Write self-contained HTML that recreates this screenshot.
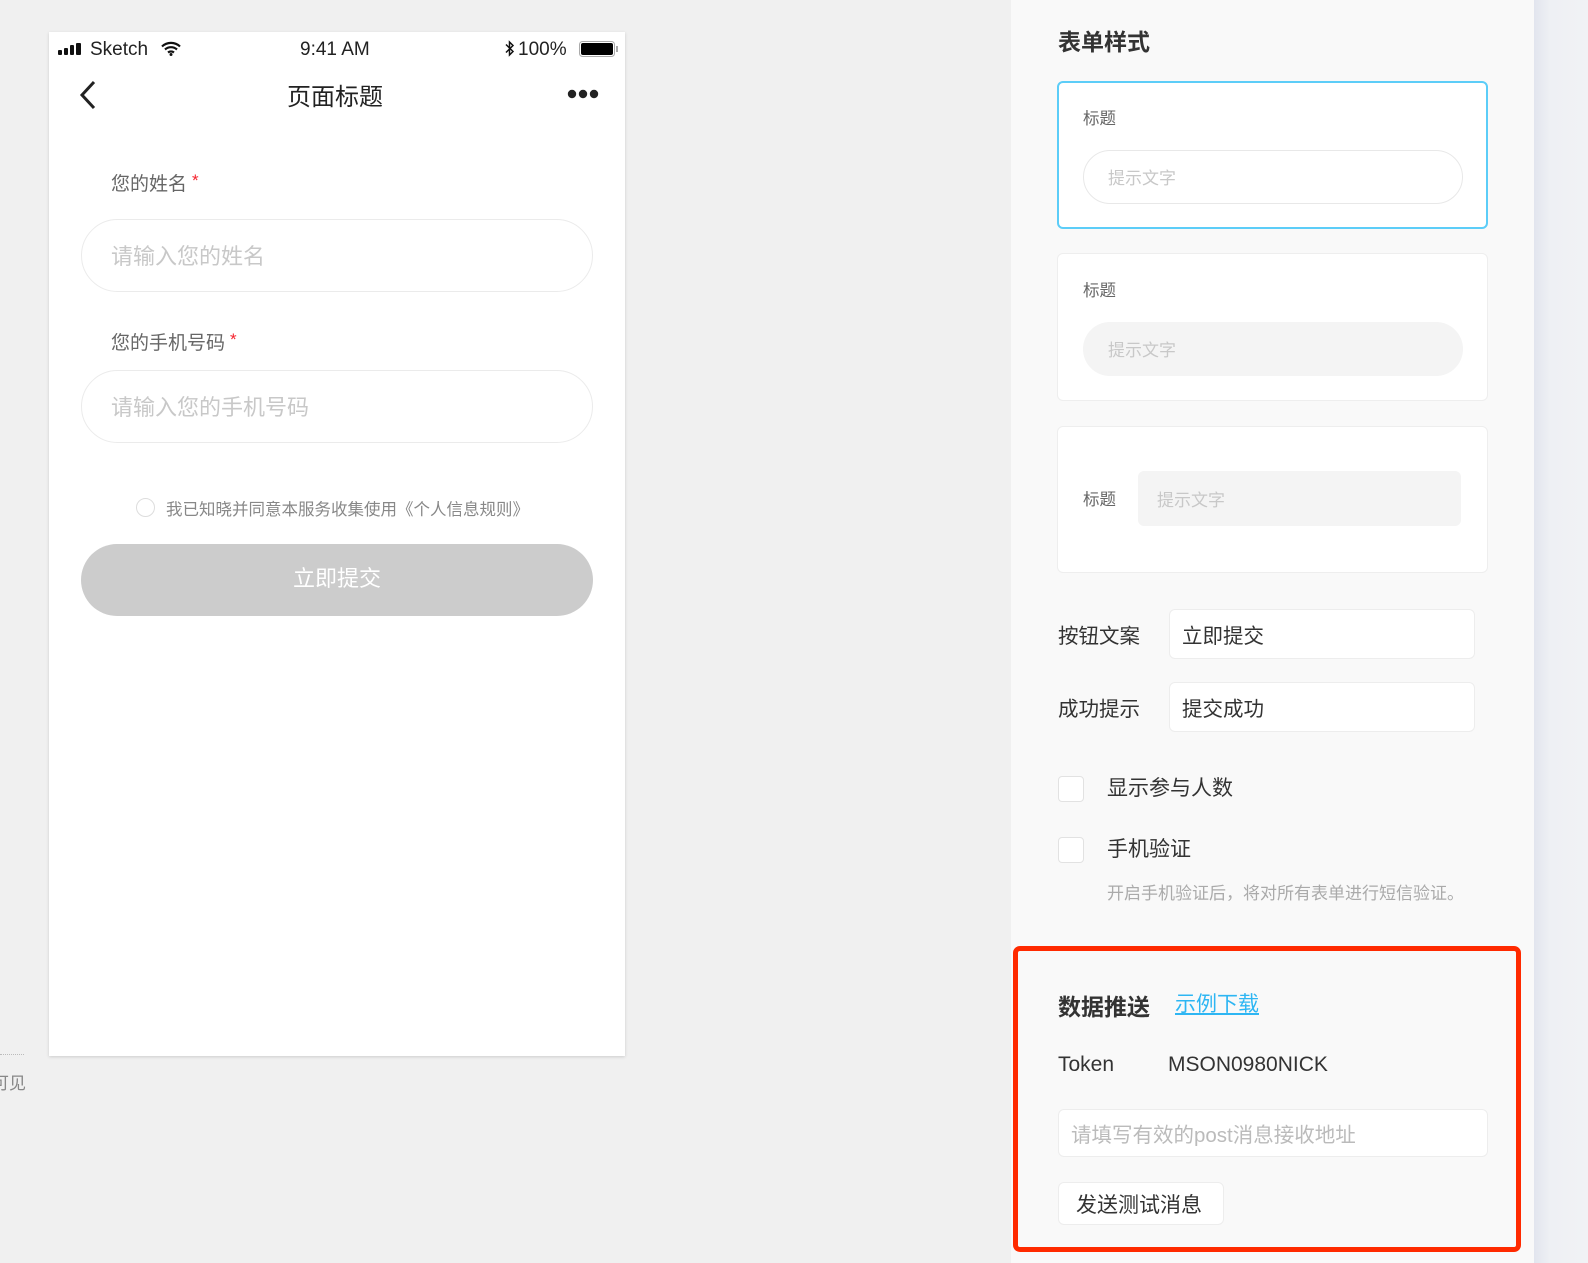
<!DOCTYPE html>
<html><head><meta charset="utf-8">
<style>
*{margin:0;padding:0;box-sizing:border-box}
html,body{width:1588px;height:1263px;overflow:hidden;background:#f0f0f0;font-family:"Liberation Sans","Noto Sans CJK SC",sans-serif;position:relative}
.a{position:absolute;white-space:nowrap}
.phone{left:49px;top:32px;width:576px;height:1024px;background:#fff;box-shadow:0 1px 3px rgba(0,0,0,.15)}
.pill{border:1.5px solid #ebebeb;border-radius:37px;background:#fff}
.ph{color:#c8c8c8}
.panel{left:1011px;top:0;width:523px;height:1263px;background:#f9f9f9}
.rside{left:1534px;top:0;width:54px;height:1263px;background:linear-gradient(90deg,#e2e5ee,#eef0f4 30%,#f1f2f5)}
.card{background:#fff;border:1px solid #eeeeee;border-radius:6px}
.inp{background:#fff;border:1px solid #ededed;border-radius:6px}
.cb{width:26px;height:26px;background:#fff;border:1px solid #e2e2e2;border-radius:4px}
.st{color:#f5222d;margin-left:5px;font-size:17px;position:relative;top:-4px}
</style></head><body>
<div class="a" style="left:0;top:1054px;width:24px;border-top:1px dotted #bbb"></div>
<div class="a" style="left:-8px;top:1069px;font-size:17px;color:#888">可见</div>

<div class="a phone">
  <svg class="a" style="left:9px;top:11px" width="26" height="12" viewBox="0 0 26 12"><rect x="0" y="7" width="4" height="5" rx="1" fill="#111"/><rect x="6" y="5" width="4" height="7" rx="1" fill="#111"/><rect x="12" y="2" width="4" height="10" rx="1" fill="#111"/><rect x="18" y="0" width="5" height="12" rx="1" fill="#111"/></svg>
  <div class="a" style="left:41px;top:7px;font-size:19px;color:#222">Sketch</div>
  <svg class="a" style="left:112px;top:9px" width="20" height="15" viewBox="0 0 20 15"><path d="M1 5.5a13 13 0 0 1 18 0M4 8.5a9 9 0 0 1 12 0M7 11.5a5 5 0 0 1 6 0" stroke="#111" stroke-width="2.2" fill="none"/><circle cx="10" cy="13.5" r="1.5" fill="#111"/></svg>
  <div class="a" style="left:251px;top:7px;font-size:19px;color:#222">9:41 AM</div>
  <svg class="a" style="left:456px;top:8px" width="10" height="17" viewBox="0 0 10 17"><path d="M1 4.5l7 7-3.5 3.5V2L8 5.5l-7 7" stroke="#111" stroke-width="1.5" fill="none"/></svg>
  <div class="a" style="left:469px;top:7px;font-size:19px;color:#222">100%</div>
  <svg class="a" style="left:530px;top:9px" width="40" height="16" viewBox="0 0 40 16"><rect x="0.5" y="0.5" width="35" height="15" rx="3" fill="none" stroke="#aaa"/><rect x="2" y="2" width="32" height="12" rx="2" fill="#000"/><rect x="37" y="5" width="2" height="6" fill="#aaa"/></svg>
  <svg class="a" style="left:30px;top:48px" width="18" height="30" viewBox="0 0 18 30"><path d="M15 2L3 15l12 13" stroke="#222" stroke-width="3" fill="none"/></svg>
  <div class="a" style="left:238px;top:45px;font-size:24px;color:#222">页面标题</div>
  <svg class="a" style="left:518px;top:57px" width="32" height="10" viewBox="0 0 32 10"><circle cx="5" cy="5" r="4.2" fill="#222"/><circle cx="16" cy="5" r="4.2" fill="#222"/><circle cx="27" cy="5" r="4.2" fill="#222"/></svg>

  <div class="a" style="left:62px;top:137px;font-size:19px;color:#666">您的姓名<span class="st">*</span></div>
  <div class="a pill" style="left:32px;top:187px;width:512px;height:73px"></div>
  <div class="a ph" style="left:62px;top:207px;font-size:22px">请输入您的姓名</div>
  <div class="a" style="left:62px;top:296px;font-size:19px;color:#666">您的手机号码<span class="st">*</span></div>
  <div class="a pill" style="left:32px;top:338px;width:512px;height:73px"></div>
  <div class="a ph" style="left:62px;top:358px;font-size:22px">请输入您的手机号码</div>
  <div class="a" style="left:87px;top:466px;width:19px;height:19px;border:1.5px solid #ddd;border-radius:50%"></div>
  <div class="a" style="left:117px;top:464px;font-size:16.5px;color:#888">我已知晓并同意本服务收集使用《个人信息规则》</div>
  <div class="a" style="left:32px;top:512px;width:512px;height:72px;border-radius:36px;background:#cccccc"></div>
  <div class="a" style="left:32px;top:529px;width:512px;text-align:center;font-size:22px;color:#fff">立即提交</div>
</div>

<div class="a panel"></div>
<div class="a rside"></div>

<div class="a" style="left:1058px;top:23px;font-size:23px;font-weight:bold;color:#333">表单样式</div>
<div class="a card" style="left:1057px;top:81px;width:431px;height:148px;border:2px solid #5ccdf8"></div>
<div class="a" style="left:1083px;top:105px;font-size:16.5px;color:#666">标题</div>
<div class="a" style="left:1083px;top:150px;width:380px;height:54px;border:1.5px solid #e8e8e8;border-radius:27px;background:#fff"></div>
<div class="a ph" style="left:1108px;top:164px;font-size:17px">提示文字</div>

<div class="a card" style="left:1057px;top:253px;width:431px;height:148px"></div>
<div class="a" style="left:1083px;top:277px;font-size:16.5px;color:#666">标题</div>
<div class="a" style="left:1083px;top:322px;width:380px;height:54px;border-radius:27px;background:#f4f4f4"></div>
<div class="a ph" style="left:1108px;top:336px;font-size:17px">提示文字</div>

<div class="a card" style="left:1057px;top:426px;width:431px;height:147px"></div>
<div class="a" style="left:1083px;top:486px;font-size:16.5px;color:#666">标题</div>
<div class="a" style="left:1138px;top:471px;width:323px;height:55px;border-radius:6px;background:#f4f4f4"></div>
<div class="a ph" style="left:1157px;top:486px;font-size:17px">提示文字</div>

<div class="a" style="left:1058px;top:619px;font-size:20.5px;color:#333">按钮文案</div>
<div class="a inp" style="left:1169px;top:609px;width:306px;height:50px"></div>
<div class="a" style="left:1182px;top:619px;font-size:20.5px;color:#333">立即提交</div>
<div class="a" style="left:1058px;top:692px;font-size:20.5px;color:#333">成功提示</div>
<div class="a inp" style="left:1169px;top:682px;width:306px;height:50px"></div>
<div class="a" style="left:1182px;top:692px;font-size:20.5px;color:#333">提交成功</div>

<div class="a cb" style="left:1058px;top:776px"></div>
<div class="a" style="left:1107px;top:772px;font-size:21px;color:#333">显示参与人数</div>
<div class="a cb" style="left:1058px;top:837px"></div>
<div class="a" style="left:1107px;top:833px;font-size:21px;color:#333">手机验证</div>
<div class="a" style="left:1107px;top:879px;font-size:17px;color:#aaa">开启手机验证后，将对所有表单进行短信验证。</div>

<div class="a" style="left:1013px;top:946px;width:508px;height:306px;border:5px solid #ff2a00;border-radius:7px"></div>
<div class="a" style="left:1058px;top:988px;font-size:23px;font-weight:bold;color:#333">数据推送</div>
<div class="a" style="left:1175px;top:988px;font-size:21px;color:#2eb6f3;text-decoration:underline">示例下载</div>
<div class="a" style="left:1058px;top:1053px;font-size:21px;color:#333">Token</div>
<div class="a" style="left:1168px;top:1053px;font-size:21px;color:#333">MSON0980NICK</div>
<div class="a inp" style="left:1058px;top:1109px;width:430px;height:48px"></div>
<div class="a" style="left:1071px;top:1118px;font-size:20.5px;color:#bbb">请填写有效的post消息接收地址</div>
<div class="a inp" style="left:1058px;top:1182px;width:166px;height:43px"></div>
<div class="a" style="left:1076px;top:1189px;font-size:21px;color:#333">发送测试消息</div>
</body></html>
